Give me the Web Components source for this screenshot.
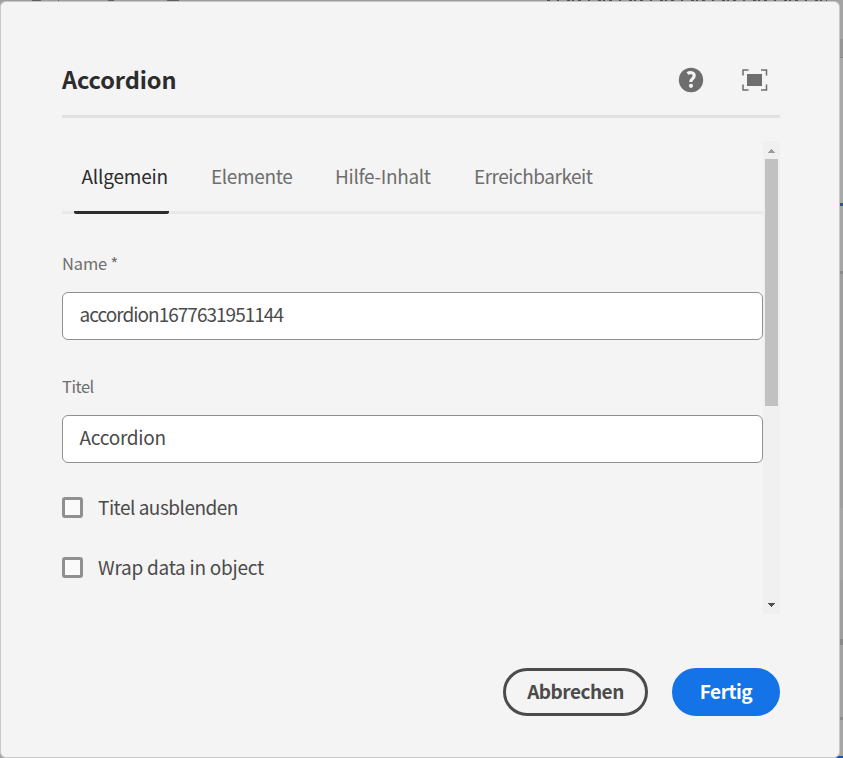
<!DOCTYPE html>
<html lang="de"><head><meta charset="utf-8"><title>Accordion</title>
<style>
html,body{margin:0;height:758px;overflow:hidden}
body{font-family:"Noto Sans CJK SC","Open Sans",sans-serif;font-size:19px;color:#4b4b4b}
check-box:first-of-type{margin-top:17px}
</style></head><body>
<editor-page>
  <edit-dialog heading="Accordion">
    <tab-bar>
      <tab-item active style="--w:95px;--p:7.500px;--ls:-.2px">Allgemein</tab-item>
      <tab-item style="--w:130px;--p:42px;--ls:-.36px">Elemente</tab-item>
      <tab-item style="--w:138px;--p:36px;--ls:-.34px">Hilfe-Inhalt</tab-item>
      <tab-item style="--w:160px;--p:37px;--ls:-.48px">Erreichbarkeit</tab-item>
    </tab-bar>
    <text-field label="Name *" value="accordion1677631951144" style="--ls:-.98px"></text-field>
    <text-field label="Titel" value="Accordion" style="--ls:-.28px;--lls:-.5px"></text-field>
    <check-box style="--ls:-.5px">Titel ausblenden</check-box>
    <check-box style="--ls:-.26px">Wrap data in object</check-box>
    <pill-button slot="actions" style="--w:145px;--ls:-.5px">Abbrechen</pill-button>
    <pill-button slot="actions" primary style="--w:108px;--ls:-.45px">Fertig</pill-button>
  </edit-dialog>
</editor-page>
<script>
const define=(name,html,init)=>customElements.define(name,class extends HTMLElement{
  connectedCallback(){
    if(this.shadowRoot)return;
    const t=document.createElement('template');t.innerHTML=html;
    const r=this.attachShadow({mode:'open'});r.append(t.content.cloneNode(true));
    if(init)init(this,r);
  }
});

define('editor-page',`<style>
:host{display:block;position:relative;box-sizing:border-box;width:843px;height:758px;padding-top:1px;overflow:hidden;background:#a6a6a6}
svg{position:absolute;left:0;top:0}
</style>
<svg width="843" height="758" shape-rendering="crispEdges">
<path d="M0 0H843V1H0z" fill="#9e9e9e"/>
<path d="M32 0h9v1h-9zM58 0h1v1h-1zM108 0h6v1h-6zM167 0h12v1h-12z" fill="#5d5d5d"/>
<path d="M547 .5H827" stroke="#4d4d4d" stroke-dasharray="3 7 2 8 3 2 2 4"/>
<path d="M839 0h4v39h-4z" fill="#a4a4a4"/><path d="M839 39h4v19h-4z" fill="#969696"/><path d="M839 57h4v1h-4z" fill="#868686"/>
<path d="M839 58h4v146h-4z" fill="#a9a9a9"/><path d="M839 203h4v3h-4z" fill="#1259b0"/>
<path d="M839 271h4v3h-4z" fill="#8a8a8a"/><path d="M839 274h4v234h-4z" fill="#9f9f9f"/>
<path d="M839 580h4v59h-4z" fill="#9f9f9f"/><path d="M839 639h4v6h-4z" fill="#898989"/>
<path d="M839 645h4v72h-4z" fill="#a2a2a2"/><path d="M839 717h4v3h-4z" fill="#8a8a8a"/>
<path d="M836 756h7v2h-7z" fill="#1259b0"/>
</svg><slot></slot>`);

define('edit-dialog',`<style>
:host{display:flex;flex-direction:column;position:relative;box-sizing:border-box;width:840px;height:757px;padding:47px 59px 41px 61px;background:#f4f4f4;border:1px solid #c8c8c8;border-radius:6px}
header{display:flex;align-items:center;height:66px;box-sizing:content-box;border-bottom:3px solid #e1e1e1}
h1{flex:1;margin:0 0 7px;font-size:23.5px;line-height:32px;font-weight:700;letter-spacing:-.08px;color:#2c2c2c}
svg{display:block;margin-bottom:5px}
.full{margin:0 12.500px 5px 37.500px}
.body{display:flex;height:473px;margin-top:23px}
.content{flex:1;overflow:hidden}
footer{display:flex;justify-content:flex-end;gap:24px;margin-top:54px}
</style>
<header><h1></h1>
<svg width="26" height="26" viewBox="0 0 26 26"><circle cx="13" cy="13" r="12.2" fill="#6e6e6e"/><path d="M9.4 6.500C12.100 4.800 16.200 5.600 16.200 8.700C16.200 11.500 12.800 11.800 12.800 15" fill="none" stroke="#f4f4f4" stroke-width="3.1"/><circle cx="13" cy="18.8" r="2.1" fill="#f4f4f4"/></svg>
<svg class="full" width="26" height="22" viewBox="0 0 26 22"><path d="M5 5h15v12H5z" fill="#6e6e6e"/><path d="M1 6.5V1h5.5M19 1h5.500v5.500M24.500 15.500V21H19M6.500 21H1v-5.500" fill="none" stroke="#6e6e6e" stroke-width="1.500"/></svg>
</header>
<div class="body"><div class="content"><slot></slot></div><scroll-track></scroll-track></div>
<footer><slot name="actions"></slot></footer>`,(h,r)=>{r.querySelector('h1').textContent=h.getAttribute('heading')});

define('scroll-track',`<style>
:host{display:flex;flex-direction:column;justify-content:space-between;align-items:center;box-sizing:border-box;width:17px;height:473px;padding:8px 0 7px;background:#f0f0f0}
svg{display:block}i{width:13px;height:247px;margin:6px 0 auto;background:#c1c1c1}
</style><svg width="7" height="4" shape-rendering="crispEdges"><path d="M3 0h1v1h1v1h1v1h1v1H0V3h1V2h1V1h1z" fill="#9c9c9c"/></svg><i></i><svg width="7" height="4" shape-rendering="crispEdges"><path d="M0 0h7v1H6v1H5v1H4v1H3V3H2V2H1V1H0z" fill="#505050"/></svg>`);

define('tab-bar',`<style>
:host{display:flex;box-sizing:border-box;height:73px;padding-left:12px;border-bottom:3px solid #e9e9e9}
</style><slot></slot>`);

define('tab-item',`<style>
:host{display:block;box-sizing:border-box;width:var(--w);height:73px;padding:20px 0 0 var(--p);line-height:30px;letter-spacing:var(--ls);white-space:nowrap;color:#6e6e6e}
:host([active]){color:#2c2c2c;border-bottom:3px solid #2c2c2c;border-radius:2px}
</style><slot></slot>`);

define('text-field',`<style>
:host{display:block;padding-top:36px;height:87px}
label{display:block;height:42px;font-size:16.5px;line-height:26px;color:#6e6e6e;letter-spacing:var(--lls,-.15px)}
.box{box-sizing:border-box;height:48px;padding:0 16.500px 3px;border:1px solid #909090;border-radius:6px;background:#fff;line-height:42px;letter-spacing:var(--ls);white-space:nowrap}
</style><label></label><div class="box"></div>`,(h,r)=>{r.querySelector('label').textContent=h.getAttribute('label');r.querySelector('.box').textContent=h.getAttribute('value')});

define('check-box',`<style>
:host{display:flex;align-items:center;gap:15px;height:60px;line-height:30px;letter-spacing:var(--ls)}
i{box-sizing:border-box;width:21px;height:21px;border:3px solid #909090;border-radius:3px;background:#fafafa}
span{padding-bottom:1px}
</style><i></i><span><slot></slot></span>`);

define('pill-button',`<style>
:host{display:block;box-sizing:border-box;width:var(--w);height:48px;border:3px solid #4b4b4b;border-radius:24px;text-align:center;font-weight:700;line-height:40px;letter-spacing:var(--ls);color:#4b4b4b}
:host([primary]){border-color:#1473e6;background:#1473e6;color:#fff}
</style><slot></slot>`);
</script></body></html>
